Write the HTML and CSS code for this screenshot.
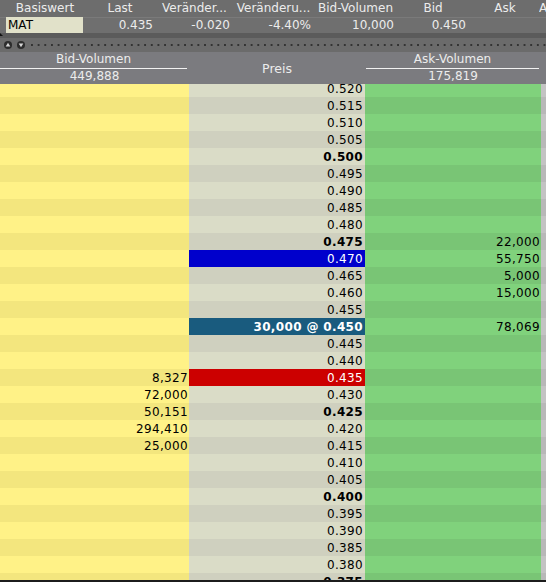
FILE: index.html
```html
<!DOCTYPE html>
<html lang="de">
<head>
<meta charset="utf-8">
<title>Orderbuch MAT</title>
<link rel="stylesheet" href="styles.css">
</head>
<body>
<div class="app">
  <div class="quote">
    <div class="qrow qhead">
      <div class="qc lead"></div>
      <div class="qc c1">Basiswert</div>
      <div class="qc c2">Last</div>
      <div class="qc c3">Veränder...</div>
      <div class="qc c4">Veränderu...</div>
      <div class="qc c5">Bid-Volumen</div>
      <div class="qc c6">Bid</div>
      <div class="qc c7">Ask</div>
      <div class="qc c8">A</div>
    </div>
    <div class="qrow qvals">
      <div class="qc lead"></div>
      <div class="qc c1"><span class="sym">MAT</span></div>
      <div class="qc c2 num">0.435</div>
      <div class="qc c3 num">-0.020</div>
      <div class="qc c4 num">-4.40%</div>
      <div class="qc c5 num">10,000</div>
      <div class="qc c6 num">0.450</div>
      <div class="qc c7 num"></div>
      <div class="qc c8"></div>
    </div>
  </div>
  <div class="band"><span class="mark"></span></div>
  <div class="toolbar">
    <svg class="btn" width="8" height="8" viewBox="0 0 8 8"><circle cx="4" cy="4" r="4" fill="#2c2c2c"/><polygon points="4,1.8 6.3,5.4 1.7,5.4" fill="#d8d8d8"/></svg>
    <svg class="btn" width="8" height="8" viewBox="0 0 8 8"><circle cx="4" cy="4" r="4" fill="#2c2c2c"/><polygon points="1.7,2.6 6.3,2.6 4,6.2" fill="#d8d8d8"/></svg>
    <div class="dots"></div>
  </div>
  <div class="bookhead">
    <div class="bh side left">
      <div class="bh-label">Bid-Volumen</div>
      <div class="bh-val">449,888</div>
    </div>
    <div class="bh mid">Preis</div>
    <div class="bh side right">
      <div class="bh-label">Ask-Volumen</div>
      <div class="bh-val">175,819</div>
    </div>
    <div class="bh pad"></div>
  </div>
  <div class="book">
    <div class="rows">
      <div class="r"><div class="b"></div><div class="p">0.520</div><div class="a"></div><div class="s"></div></div>
      <div class="r d"><div class="b"></div><div class="p">0.515</div><div class="a"></div><div class="s"></div></div>
      <div class="r"><div class="b"></div><div class="p">0.510</div><div class="a"></div><div class="s"></div></div>
      <div class="r d"><div class="b"></div><div class="p">0.505</div><div class="a"></div><div class="s"></div></div>
      <div class="r"><div class="b"></div><div class="p bold">0.500</div><div class="a"></div><div class="s"></div></div>
      <div class="r d"><div class="b"></div><div class="p">0.495</div><div class="a"></div><div class="s"></div></div>
      <div class="r"><div class="b"></div><div class="p">0.490</div><div class="a"></div><div class="s"></div></div>
      <div class="r d"><div class="b"></div><div class="p">0.485</div><div class="a"></div><div class="s"></div></div>
      <div class="r"><div class="b"></div><div class="p">0.480</div><div class="a"></div><div class="s"></div></div>
      <div class="r d"><div class="b"></div><div class="p bold">0.475</div><div class="a">22,000</div><div class="s"></div></div>
      <div class="r"><div class="b"></div><div class="p ask-best">0.470</div><div class="a">55,750</div><div class="s"></div></div>
      <div class="r d"><div class="b"></div><div class="p">0.465</div><div class="a">5,000</div><div class="s"></div></div>
      <div class="r"><div class="b"></div><div class="p">0.460</div><div class="a">15,000</div><div class="s"></div></div>
      <div class="r d"><div class="b"></div><div class="p">0.455</div><div class="a"></div><div class="s"></div></div>
      <div class="r"><div class="b"></div><div class="p last-trade bold">30,000 @ 0.450</div><div class="a">78,069</div><div class="s"></div></div>
      <div class="r d"><div class="b"></div><div class="p">0.445</div><div class="a"></div><div class="s"></div></div>
      <div class="r"><div class="b"></div><div class="p">0.440</div><div class="a"></div><div class="s"></div></div>
      <div class="r d"><div class="b">8,327</div><div class="p bid-best">0.435</div><div class="a"></div><div class="s"></div></div>
      <div class="r"><div class="b">72,000</div><div class="p">0.430</div><div class="a"></div><div class="s"></div></div>
      <div class="r d"><div class="b">50,151</div><div class="p bold">0.425</div><div class="a"></div><div class="s"></div></div>
      <div class="r"><div class="b">294,410</div><div class="p">0.420</div><div class="a"></div><div class="s"></div></div>
      <div class="r d"><div class="b">25,000</div><div class="p">0.415</div><div class="a"></div><div class="s"></div></div>
      <div class="r"><div class="b"></div><div class="p">0.410</div><div class="a"></div><div class="s"></div></div>
      <div class="r d"><div class="b"></div><div class="p">0.405</div><div class="a"></div><div class="s"></div></div>
      <div class="r"><div class="b"></div><div class="p bold">0.400</div><div class="a"></div><div class="s"></div></div>
      <div class="r d"><div class="b"></div><div class="p">0.395</div><div class="a"></div><div class="s"></div></div>
      <div class="r"><div class="b"></div><div class="p">0.390</div><div class="a"></div><div class="s"></div></div>
      <div class="r d"><div class="b"></div><div class="p">0.385</div><div class="a"></div><div class="s"></div></div>
      <div class="r"><div class="b"></div><div class="p">0.380</div><div class="a"></div><div class="s"></div></div>
      <div class="r d"><div class="b"></div><div class="p bold">0.375</div><div class="a"></div><div class="s"></div></div>
    </div>
  </div>
</div>
</body>
</html>
```

FILE: styles.css
```css
* { box-sizing: border-box; }
html, body { margin: 0; padding: 0; }
body {
  width: 546px;
  height: 582px;
  overflow: hidden;
  font-family: "DejaVu Sans", Verdana, sans-serif;
  font-size: 12px;
  background: #6e6e6e;
}
.app { width: 546px; height: 582px; display: flex; flex-direction: column; overflow: hidden; }

/* quote table */
.quote { background: #6e6e6e; color: #ececec; }
.qrow { display: flex; overflow: hidden; white-space: nowrap; }
.qhead { height: 17px; line-height: 17px; background: #6d6d6d; }
.qvals { height: 16px; line-height: 16px; background: #6f6f6f; box-shadow: inset 0 1px 0 #7a7a7a; }
.qc { flex: none; overflow: hidden; text-align: center; }
.qc.num { text-align: right; padding-right: 3px; }
.lead { width: 6px; }
.c1 { width: 78px; }
.c2 { width: 72px; }
.c3 { width: 77px; }
.c4 { width: 81px; }
.c5 { width: 83px; }
.c6 { width: 72px; }
.c7 { width: 72px; }
.c8 { width: 40px; text-align: left; margin-left: -2px; }
.qvals .c1 { text-align: left; }
.sym {
  display: block;
  width: 77px;
  height: 16px;
  background: #e1e1c9;
  color: #000;
  padding-left: 2px;
}

.band { height: 5px; background: #5b5b5b; position: relative; }
.mark {
  display: block;
  width: 0; height: 0;
  border-left: 3px solid #111;
  border-top: 3px solid transparent;
}

.toolbar {
  height: 14px;
  background: #6b6b6b;
  display: flex;
  align-items: center;
  padding-left: 4px;
  gap: 5px;
}
.btn { flex: none; display: block; }
.dots {
  flex: 1;
  height: 2px;
  margin-left: 1px;
  background-image: linear-gradient(90deg, #333 2px, transparent 2px);
  background-size: 6.67px 2px;
  background-repeat: repeat-x;
}

/* order book header */
.bookhead {
  height: 32px;
  background: #7b7b7f;
  color: #ececec;
  display: grid;
  grid-template-columns: 189px 176px 176px 5px;
}
.bh-label {
  line-height: 14px;
  height: 17px;
  padding-bottom: 2px;
  border-bottom: 1px solid #f2f2f2;
  text-align: center;
}
.left .bh-label { margin-right: 2px; }
.right .bh-label { margin-left: 1px; margin-right: 2px; }
.bh-val { height: 15px; line-height: 15px; text-align: center; }
.mid { display: flex; align-items: center; justify-content: center; font-size: 12.5px; padding-top: 1px; }

/* order book rows */
.book {
  height: 496px;
  overflow: hidden;
  border-bottom: 2px solid #1c1c1c;
  flex: none;
  height: 498px;
}
.rows { margin-top: -4px; }
.r {
  display: grid;
  grid-template-columns: 189px 176px 176px 5px;
  height: 17px;
  line-height: 15px;
  color: #000;
  letter-spacing: 0.35px;
}
.r > div { padding-top: 2px; text-align: right; white-space: nowrap; overflow: hidden; }
.b { background: #fff287; padding-right: 1px; }
.p { background: #dadcc7; padding-right: 2px; }
.a { background: #80d27c; padding-right: 1px; }
.s { background: #c3c3c3; }
.r.d .b { background: #f3e67e; }
.r.d .p { background: #cfd0bf; }
.r.d .a { background: #79c575; }
.r.d .s { background: #b8b8b8; }
.r .bold { font-weight: bold; }
.r .ask-best { background: #0000cc; color: #fff; }
.r .last-trade { background: #195b7e; color: #fff; }
.r .bid-best, .r.d .bid-best { background: #cc0000; color: #fff; }
```
